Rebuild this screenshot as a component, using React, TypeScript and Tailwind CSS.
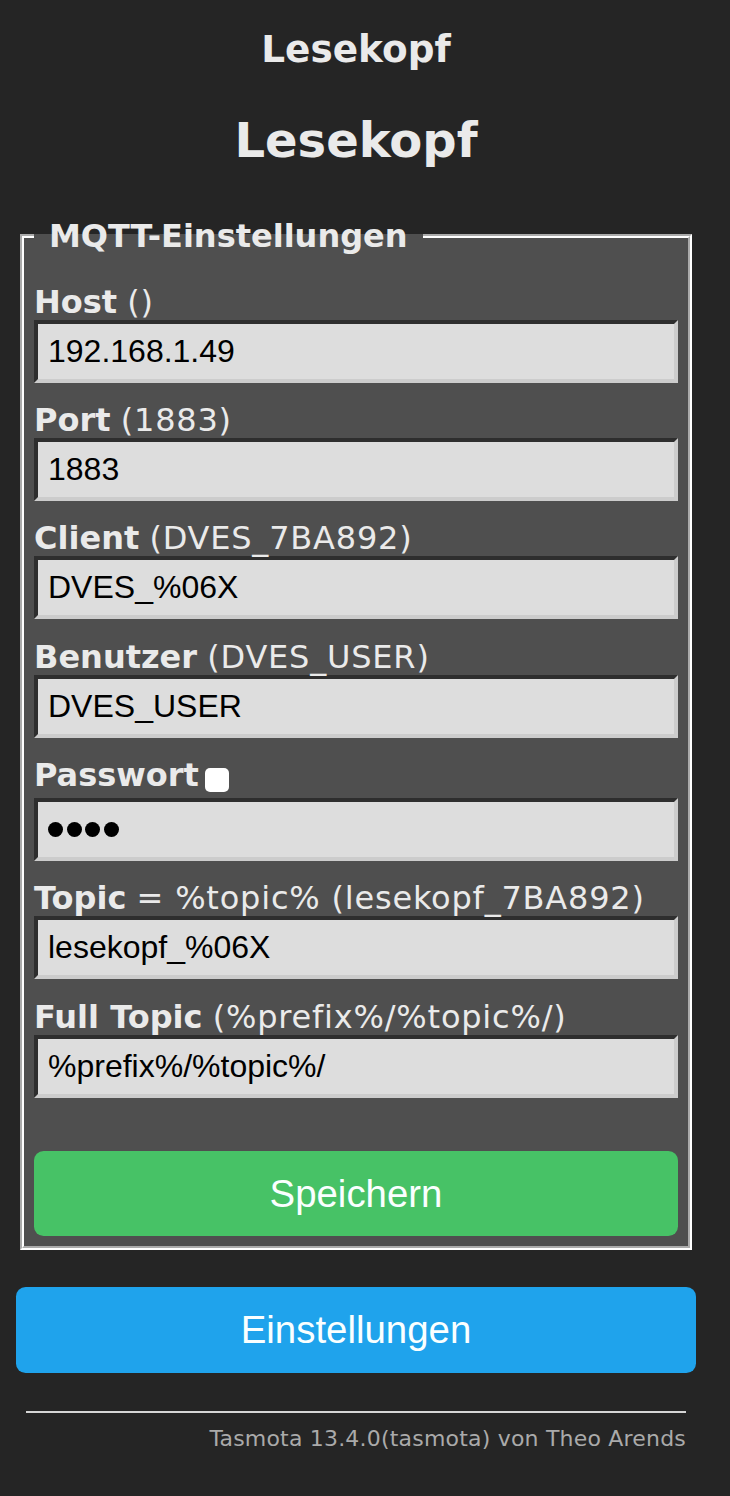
const fields = [
    { label: 'Host', hint: '()', value: '192.168.1.49' },
    { label: 'Port', hint: '(1883)', value: '1883' },
    { label: 'Client', hint: '(DVES_7BA892)', value: 'DVES_%06X' },
    { label: 'Benutzer', hint: '(DVES_USER)', value: 'DVES_USER' },
    { label: 'Passwort', hint: '', value: '', password: true },
    { label: 'Topic', hint: '= %topic% (lesekopf_7BA892)', value: 'lesekopf_%06X' },
    { label: 'Full Topic', hint: '(%prefix%/%topic%/)', value: '%prefix%/%topic%/' }
];

const inputBox =
    'block w-full h-[63px] border-4 border-t-[#2e2e2e] border-l-[#2e2e2e] border-b-[#cccccc] border-r-[#cccccc] bg-[#dddddd] px-[10px] text-black text-[32px] font-["Liberation_Sans",Arial,sans-serif] outline-none';

function Field({ label, hint, value, password }: { label: string; hint: string; value: string; password?: boolean }) {
    return (
        <div className="mt-[20.4px]">
            {password ? (
                <div className="flex h-[40px] items-start">
                    <span className="font-bold leading-[35px]">{label}</span>
                    <span className="ml-[6px] mt-[10px] h-[24px] w-[24px] rounded-[5px] bg-white" />
                </div>
            ) : (
                <div className="h-[35px] leading-[35px] whitespace-nowrap">
                    <span className="font-bold">{label}</span>{' '}
                    <span className="tracking-[0.8px]">{hint}</span>
                </div>
            )}
            {password ? (
                <div className={inputBox + ' flex items-center gap-[3.5px]'}>
                    <span className="h-[15px] w-[15px] rounded-full bg-black" />
                    <span className="h-[15px] w-[15px] rounded-full bg-black" />
                    <span className="h-[15px] w-[15px] rounded-full bg-black" />
                    <span className="h-[15px] w-[15px] rounded-full bg-black" />
                </div>
            ) : (
                <input type="text" readOnly value={value} className={inputBox} />
            )}
        </div>
    );
}

export default function App() {
    return (
        <div className="min-h-[1496px] bg-[#252525] font-['DejaVu_Sans',Verdana,sans-serif] text-[32px] text-[#eaeaea]">
            <div className="ml-[16px] w-[680px] pt-[27px]">
                <h3 className="text-center text-[37.4px] font-bold leading-[44px]">Lesekopf</h3>
                <h2 className="mt-[41px] text-center text-[48px] font-bold leading-[56px]">Lesekopf</h2>

                <fieldset className="mx-[4px] mt-[48.5px] border-4 border-white [border-style:groove] bg-[#4f4f4f] px-[10px] pt-[10px] pb-[10px]">
                    <legend className="px-[15px] font-bold leading-[39px]">MQTT-Einstellungen</legend>
                    <div className="-mt-[1.4px]">
                        {fields.map((f) => (
                            <Field key={f.label} {...f} />
                        ))}
                    </div>
                    <button
                        type="button"
                        className="mt-[53px] block h-[85px] w-full rounded-[9.6px] bg-[#47c266] text-[38.4px] text-[#faffff] font-['Liberation_Sans',Arial,sans-serif]"
                    >
                        Speichern
                    </button>
                </fieldset>

                <button
                    type="button"
                    className="mt-[37px] block h-[86px] w-full rounded-[9.6px] bg-[#1fa3ec] text-[38.4px] text-[#faffff] font-['Liberation_Sans',Arial,sans-serif]"
                >
                    Einstellungen
                </button>

                <div className="mt-[38px] px-[10px] text-right">
                    <div className="h-[2px] bg-[#d6d6d6]" />
                    <div className="mt-[13px] text-[22px] leading-[26px] tracking-[0.2px] text-[#aaaaaa]">
                        Tasmota 13.4.0(tasmota) von Theo Arends
                    </div>
                </div>
            </div>
        </div>
    );
}
